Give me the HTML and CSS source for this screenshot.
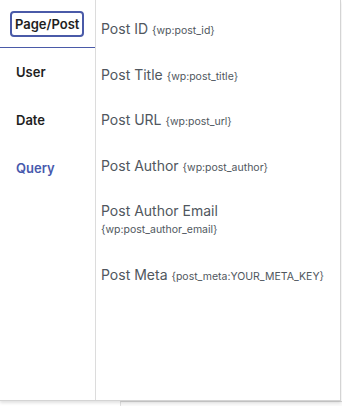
FILE: index.html
```html
<!DOCTYPE html>
<html>
<head>
<meta charset="utf-8">
<link rel="stylesheet" href="styles.css">
</head>
<body>
<div class="backdrop"></div>
<div class="popover">
  <nav class="tabs">
    <div class="tab active"><span class="tab-btn">Page/Post</span></div>
    <div class="tab">User</div>
    <div class="tab">Date</div>
    <div class="tab query">Query</div>
  </nav>
  <ul class="items">
    <li class="item"><span class="title">Post ID</span> <code class="tag">{wp:post_id}</code></li>
    <li class="item"><span class="title">Post Title</span> <code class="tag">{wp:post_title}</code></li>
    <li class="item"><span class="title">Post URL</span> <code class="tag">{wp:post_url}</code></li>
    <li class="item"><span class="title">Post Author</span> <code class="tag">{wp:post_author}</code></li>
    <li class="item"><span class="title">Post Author Email</span><code class="tag block">{wp:post_author_email}</code></li>
    <li class="item"><span class="title">Post Meta</span> <code class="tag">{post_meta:YOUR_META_KEY}</code></li>
  </ul>
</div>
</body>
</html>
```

FILE: styles.css
```css
html, body {
  margin: 0;
  padding: 0;
  background: #fff;
}
body {
  width: 342px;
  height: 406px;
  overflow: hidden;
  position: relative;
  font-family: Inter, "Noto Sans", sans-serif;
}
.backdrop {
  position: absolute;
  left: 120px;
  top: 401px;
  width: 222px;
  height: 5px;
  border-top: 1px solid #d6d6d6;
  border-left: 1px solid #e0e0e0;
  background: #fafafa;
}
.popover {
  position: relative;
  display: flex;
  width: 340px;
  height: 400px;
  border-right: 1px solid #d4d4d4;
  border-bottom: 1px solid #d4d4d4;
  box-shadow: 0 2px 3px rgba(0,0,0,0.12);
  background: #fff;
  box-sizing: content-box;
}
.tabs {
  width: 95px;
  flex: none;
  border-right: 1px solid #dcdcdc;
  display: flex;
  flex-direction: column;
}
.tab {
  height: 48px;
  display: flex;
  align-items: center;
  padding-left: 16px;
  font-size: 13px;
  font-weight: 600;
  color: #1e1e1e;
  box-sizing: border-box;
}
.tab.active {
  padding-left: 10px;
  border-bottom: 1.5px solid #4a5aa8;
}
.tab-btn {
  display: inline-flex;
  align-items: center;
  height: 26px;
  padding: 0 3px;
  border: 2px solid #4a5aa8;
  border-radius: 4px;
  box-sizing: border-box;
  margin-top: 1px;
}
.tab.query {
  color: #4759ad;
}
.items {
  list-style: none;
  margin: 0;
  padding: 8px 0 0 5px;
  flex: 1;
}
.item {
  padding: 12px 0 13.5px;
  font-size: 14px;
  line-height: 18px;
  color: #50575e;
}
.title {
  font-size: 14px;
  line-height: 18px;
  vertical-align: baseline;
}
.tag {
  font-family: Inter, "Noto Sans", sans-serif;
  font-size: 10.5px;
  line-height: 18px;
  color: #50575e;
}
.tag.block {
  display: block;
  line-height: 20px;
}
```
